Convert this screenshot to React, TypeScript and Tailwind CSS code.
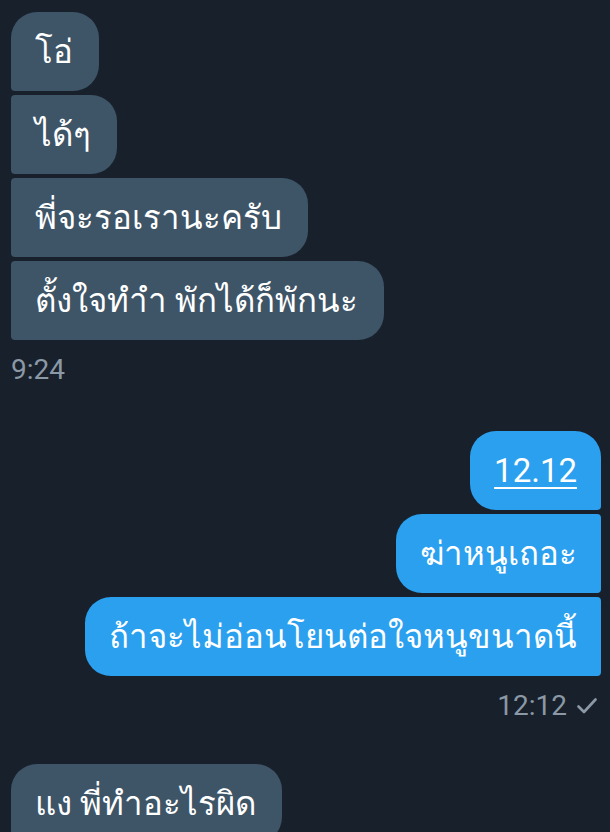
import React from "react";

const font = { fontFamily: "Roboto, 'Noto Sans', sans-serif" };

function In({ text, first }: { text: string; first?: boolean }) {
  return (
    <div
      className={`self-start h-[79px] flex items-center pl-[24px] pr-[26px] bg-[#3e5467] text-white text-[33px] leading-none rounded-r-[26px] ${
        first ? "rounded-tl-[26px] rounded-bl-[4px]" : "rounded-l-[4px]"
      }`}
    >
      {text}
    </div>
  );
}

function Out({ text, first, underline }: { text: string; first?: boolean; underline?: boolean }) {
  return (
    <div
      className={`self-end h-[79px] flex items-center pl-[24px] pr-[24px] bg-[#2ba0ef] text-white text-[33px] leading-none rounded-l-[26px] ${
        first ? "rounded-tr-[26px] rounded-br-[4px]" : "rounded-r-[4px]"
      }`}
    >
      <span className={underline ? "underline underline-offset-[5px] decoration-[1.5px]" : ""}>{text}</span>
    </div>
  );
}

export default function App() {
  return (
    <div className="w-[610px] h-[832px] overflow-hidden bg-[#18212b] flex flex-col pl-[11px] pr-[9px] pt-[12px]" style={font}>
      <div className="flex flex-col gap-[4px]">
        <In text="โอ่" first />
        <In text="ได้ๆ" />
        <In text="พี่จะรอเรานะครับ" />
        <In text="ตั้งใจทำำ พักได้ก็พักนะ" />
      </div>
      <div className="mt-[14px] text-[28px] leading-[32px] text-[#8b98a6]">9:24</div>
      <div className="mt-[45px] flex flex-col gap-[4px]">
        <Out text="12.12" first underline />
        <Out text="ฆ่าหนูเถอะ" />
        <Out text="ถ้าจะไม่อ่อนโยนต่อใจหนูขนาดนี้" />
      </div>
      <div className="self-end mt-[14px] mr-[4px] flex items-center gap-[10px] text-[28px] leading-[32px] text-[#8b98a6]">
        <span>12:12</span>
        <svg width="20" height="16" viewBox="0 0 20 16" fill="none">
          <path d="M1.5 8.5 L7 14 L18.5 1.5" stroke="#8b98a6" strokeWidth="2.6" strokeLinecap="round" strokeLinejoin="round" />
        </svg>
      </div>
      <div className="mt-[42px] flex flex-col">
        <In text="แง พี่ทำอะไรผิด" first />
      </div>
    </div>
  );
}
